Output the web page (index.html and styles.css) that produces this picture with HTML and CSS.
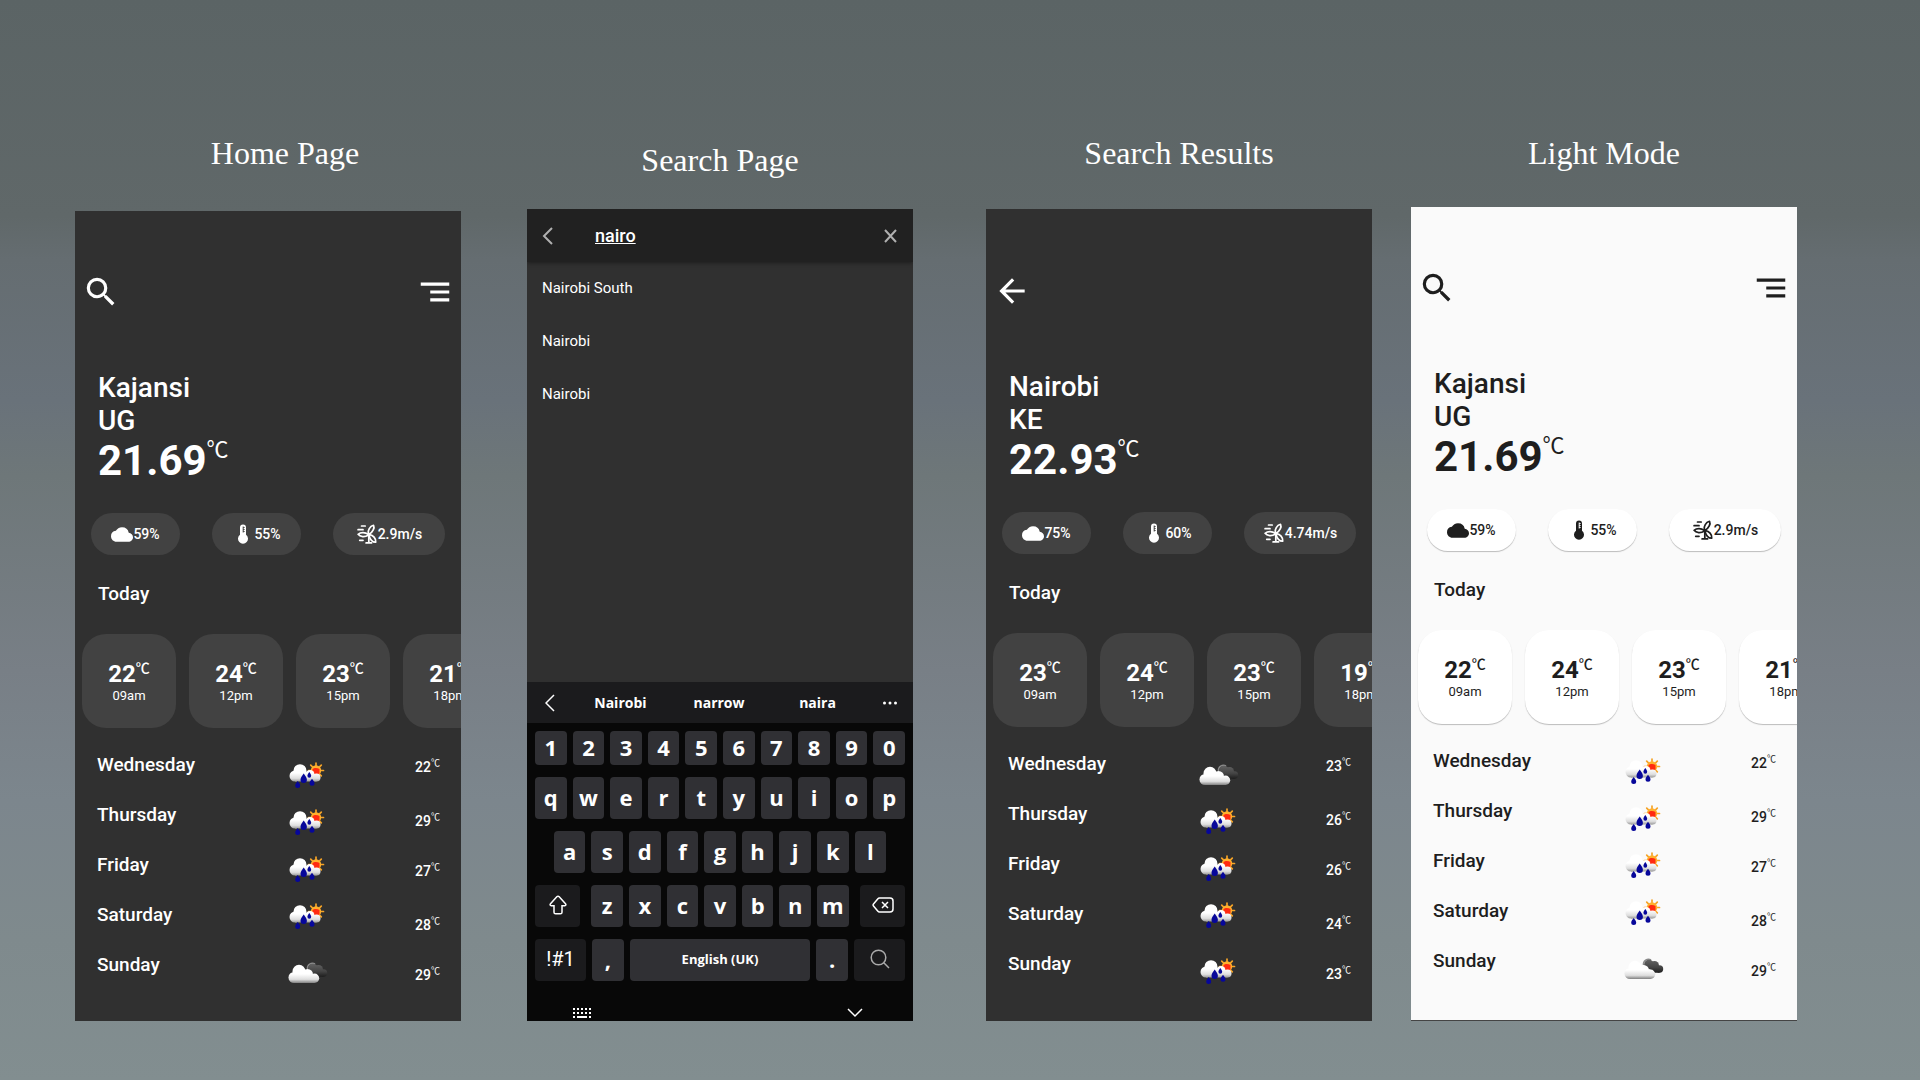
FILE: index.html
```html
<!DOCTYPE html>
<html lang="en">
<head>
    <meta charset="UTF-8">
    <meta name="viewport" content="width=device-width, initial-scale=1.0">
    <title>Weather App</title>

    <link rel="stylesheet" href="styles.css">
</head>
<body>
    <!-- shared icons -->
    <svg class="sprite" width="0" height="0" aria-hidden="true">
        <defs>
            <linearGradient id="cloudFill" gradientUnits="userSpaceOnUse" x1="0" y1="2" x2="0" y2="20">
                <stop offset="0.5" stop-color="#ffffff"/>
                <stop offset="0.8" stop-color="#dedede"/>
                <stop offset="1" stop-color="#909090"/>
            </linearGradient>
            <linearGradient id="cloudyFill" gradientUnits="userSpaceOnUse" x1="0" y1="6" x2="0" y2="24">
                <stop offset="0.5" stop-color="#ffffff"/>
                <stop offset="0.8" stop-color="#dedede"/>
                <stop offset="1" stop-color="#808080"/>
            </linearGradient>
            <linearGradient id="darkFill" gradientUnits="userSpaceOnUse" x1="0" y1="4" x2="0" y2="18">
                <stop offset="0" stop-color="#666666"/>
                <stop offset="0.6" stop-color="#444444"/>
                <stop offset="1" stop-color="#1c1c1c"/>
            </linearGradient>
        </defs>
        <symbol id="search" viewBox="0 0 24 24">
            <path fill="currentColor" d="M15.5 14h-.79l-.28-.27A6.47 6.47 0 0 0 16 9.5 6.5 6.5 0 1 0 9.5 16c1.61 0 3.09-.59 4.23-1.57l.27.28v.79l5 4.99L20.49 19l-4.99-5zm-6 0a4.5 4.5 0 1 1 0-9 4.5 4.5 0 0 1 0 9z"/>
        </symbol>
        <symbol id="menu" viewBox="0 0 24 24">
            <path fill="currentColor" d="M3 6h18v2H3zM9 11h12v2H9zM9 16h12v2H9z"/>
        </symbol>
        <symbol id="back" viewBox="0 0 24 24">
            <path fill="currentColor" d="M20 11H7.83l5.59-5.59L12 4l-8 8 8 8 1.41-1.41L7.83 13H20v-2z"/>
        </symbol>
        <symbol id="cloud" viewBox="0 0 24 16">
            <path fill="currentColor" d="M19.35 6.04A7.49 7.49 0 0 0 12 0C9.11 0 6.6 1.64 5.35 4.04A5.994 5.994 0 0 0 0 10c0 3.31 2.69 6 6 6h13c2.76 0 5-2.24 5-5 0-2.64-2.05-4.78-4.65-4.96z"/>
        </symbol>
        <symbol id="thermo" viewBox="0 0 22 20">
            <path fill="currentColor" d="M8 3.500a3 3 0 0 1 6 0v7.200a5 5 0 1 1-6 0z"/>
            <path class="marks" d="M11.200 2.500v6M11.200 3.500h1.400M11.200 5.500h1.400M11.200 7.500h1.400"/>
        </symbol>
        <symbol id="wind" viewBox="0 0 22 22">
            <g fill="none" stroke="currentColor" stroke-width="1.900" stroke-linecap="round" stroke-linejoin="round">
                <path d="M5 2.200h4M1.200 6.200h5.400M3 18h3.600M10 20.800h6M13 14v6.600"/>
                <path d="M12.400 10.600C11.800 6.800 14 2.600 18.200 1.400 19.600 4.200 17.400 9.200 13.600 11"/>
                <path d="M13.800 11.600C17.600 12.400 21 15.600 20.600 20 17.200 20.200 14.400 16.800 13.200 12.600"/>
                <path d="M12.400 11.400C9 9 4.200 8.800 1.200 11.400 3.400 14.400 8.600 14.600 12.400 12.400"/>
            </g>
            <circle cx="13" cy="11.600" r="1.600" fill="currentColor"/>
        </symbol>
        <symbol id="rain" viewBox="0 0 40 28">
            <g stroke="#f5a327" stroke-width="1.700" stroke-linecap="round">
                <path d="M28 1v15M20.500 8.500h15M22.700 3.200l10.600 10.600M33.300 3.200L22.700 13.800"/>
            </g>
            <circle cx="28" cy="8.500" r="5.200" fill="#ffb02e"/>
            <path fill="#ff2a10" d="M24.500 7c1.500-1.500 5-1.500 7 0v4.500l-3 1.200-4-1.200z"/>
            <g fill="url(#cloudFill)">
                <circle cx="7" cy="14" r="5.500"/>
                <circle cx="12" cy="8.700" r="6.500"/>
                <circle cx="22" cy="12.500" r="4.500"/>
                <circle cx="28.500" cy="15.500" r="4"/>
                <path d="M7 10h15l6.500 5v4.500H7z"/>
            </g>
            <g fill="#07079a">
                <path d="M15.700 11.500c1.700 2.500 3.200 4.300 3.200 6.200a3.200 3.200 0 0 1-6.400 0c0-1.900 1.500-3.700 3.200-6.200z"/>
                <path d="M9.700 19c1.200 1.800 2.500 3 2.500 4.500a2.500 2.500 0 0 1-5 0c0-1.500 1.300-2.700 2.500-4.500z"/>
                <path d="M24 16.800c1.200 1.800 2.500 3 2.500 4.500a2.500 2.500 0 0 1-5 0c0-1.500 1.300-2.700 2.500-4.500z"/>
                <path d="M21.300 10c1 1.500 1.900 2.600 1.900 3.800a1.900 1.900 0 0 1-3.800 0c0-1.200.9-2.300 1.900-3.800z"/>
            </g>
        </symbol>
        <symbol id="cloudy" viewBox="0 0 40 28">
            <path fill="none" stroke="#8a8a8a" stroke-width="1.500" d="M19.500 10a5 5 0 0 1 7.500-5"/>
            <g fill="url(#darkFill)">
                <circle cx="25" cy="9.500" r="4.800"/>
                <circle cx="30.500" cy="10.500" r="4.500"/>
                <circle cx="35.500" cy="14" r="3.700"/>
                <path d="M25 9l10.500 5v3.700H27z"/>
            </g>
            <g fill="url(#cloudyFill)">
                <circle cx="6" cy="18.500" r="5.500"/>
                <circle cx="11" cy="12.300" r="6.500"/>
                <circle cx="19.500" cy="15.500" r="5.500"/>
                <circle cx="26.500" cy="19.300" r="4.700"/>
                <path d="M6 14h14l6.500 5v5H6z"/>
            </g>
        </symbol>
    </svg>

    <main class="gallery">
        <section class="screen screen-home">
            <h2>Home Page</h2>
            <div class="phone">
                <div class="topbar">
                    <button type="button" aria-label="Search"><svg><use href="#search"/></svg></button>
                    <button type="button" aria-label="Menu"><svg><use href="#menu"/></svg></button>
                </div>
                <div class="location">
                    <p>Kajansi</p>
                    <p>UG</p>
                    <div class="temp">21.69<span class="unit">℃</span></div>
                </div>
                <ul class="stats">
                    <li><svg class="cloud"><use href="#cloud"/></svg>59%</li>
                    <li><svg><use href="#thermo"/></svg>55%</li>
                    <li class="wide"><svg><use href="#wind"/></svg>2.9m/s</li>
                </ul>
                <h3>Today</h3>
                <ul class="hours">
                    <li><div class="hour-temp">22<span class="unit">℃</span></div><span>09am</span></li>
                    <li><div class="hour-temp">24<span class="unit">℃</span></div><span>12pm</span></li>
                    <li><div class="hour-temp">23<span class="unit">℃</span></div><span>15pm</span></li>
                    <li><div class="hour-temp">21<span class="unit">℃</span></div><span>18pm</span></li>
                </ul>
                <div class="forecast">
                    <ul class="days">
                        <li>Wednesday</li>
                        <li>Thursday</li>
                        <li>Friday</li>
                        <li>Saturday</li>
                        <li>Sunday</li>
                    </ul>
                    <ul class="icons">
                        <li><svg><use href="#rain"/></svg></li>
                        <li><svg><use href="#rain"/></svg></li>
                        <li><svg><use href="#rain"/></svg></li>
                        <li><svg><use href="#rain"/></svg></li>
                        <li><svg><use href="#cloudy"/></svg></li>
                    </ul>
                    <ul class="temps">
                        <li>22<span class="unit">℃</span></li>
                        <li>29<span class="unit">℃</span></li>
                        <li>27<span class="unit">℃</span></li>
                        <li>28<span class="unit">℃</span></li>
                        <li>29<span class="unit">℃</span></li>
                    </ul>
                </div>
            </div>
        </section>

        <section class="screen screen-search">
            <h2>Search Page</h2>
            <div class="phone">
                <form class="searchbar">
                    <button type="button" aria-label="Back"><svg viewBox="0 0 13 18"><path d="M11 1L3 9l8 8"/></svg></button>
                    <input type="text" aria-label="Search city" value="nairo">
                    <button type="button" aria-label="Clear"><svg viewBox="0 0 13 18"><path d="M1 3l11 12M12 3L1 15"/></svg></button>
                </form>
                <ul class="results">
                    <li><a href="#">Nairobi South</a></li>
                    <li><a href="#">Nairobi</a></li>
                    <li><a href="#">Nairobi</a></li>
                </ul>
                <div class="keyboard">
                    <div class="suggestions">
                        <button type="button" aria-label="Previous"><svg width="10" height="18" viewBox="0 0 10 18"><path d="M9 1L1 9l8 8"/></svg></button>
                        <div class="words">
                            <button type="button">Nairobi</button>
                            <button type="button">narrow</button>
                            <button type="button">naira</button>
                        </div>
                        <button type="button" aria-label="More"><svg width="14" height="4" viewBox="0 0 14 4"><g fill="#fff" stroke="none"><circle cx="1.500" cy="2" r="1.500"/><circle cx="7" cy="2" r="1.500"/><circle cx="12.500" cy="2" r="1.500"/></g></svg></button>
                    </div>
                    <div class="keys">
                        <div class="row numbers">
                            <button type="button">1</button>
                            <button type="button">2</button>
                            <button type="button">3</button>
                            <button type="button">4</button>
                            <button type="button">5</button>
                            <button type="button">6</button>
                            <button type="button">7</button>
                            <button type="button">8</button>
                            <button type="button">9</button>
                            <button type="button">0</button>
                        </div>
                        <div class="row">
                            <button type="button">q</button>
                            <button type="button">w</button>
                            <button type="button">e</button>
                            <button type="button">r</button>
                            <button type="button">t</button>
                            <button type="button">y</button>
                            <button type="button">u</button>
                            <button type="button">i</button>
                            <button type="button">o</button>
                            <button type="button">p</button>
                        </div>
                        <div class="row">
                            <button type="button">a</button>
                            <button type="button">s</button>
                            <button type="button">d</button>
                            <button type="button">f</button>
                            <button type="button">g</button>
                            <button type="button">h</button>
                            <button type="button">j</button>
                            <button type="button">k</button>
                            <button type="button">l</button>
                        </div>
                        <div class="row">
                            <button type="button" class="dark shift" aria-label="Shift"><svg width="18" height="20" viewBox="0 0 18 20"><path d="M9 1.200c.5 0 .8.200 1.200.6l6.300 7c.8.900.4 1.900-.7 1.900H13v6.500c0 1-.6 1.600-1.600 1.600H6.600c-1 0-1.600-.6-1.600-1.600v-6.500H2.200c-1.100 0-1.500-1-.7-1.900l6.300-7c.4-.4.700-.6 1.200-.6z"/></svg></button>
                            <button type="button">z</button>
                            <button type="button">x</button>
                            <button type="button">c</button>
                            <button type="button">v</button>
                            <button type="button">b</button>
                            <button type="button">n</button>
                            <button type="button">m</button>
                            <button type="button" class="dark delete" aria-label="Delete"><svg width="22" height="16" viewBox="0 0 22 16"><path d="M7.500 1H18c1.700 0 3 1.300 3 3v8c0 1.700-1.300 3-3 3H7.500c-.8 0-1.300-.3-1.800-.9L1.500 9c-.6-.7-.6-1.300 0-2l4.200-5.100C6.200 1.300 6.700 1 7.500 1zM10 5l6 6M16 5l-6 6"/></svg></button>
                        </div>
                        <div class="row">
                            <button type="button" class="dark symbols">!#1</button>
                            <button type="button">,</button>
                            <button type="button" class="space">English (UK)</button>
                            <button type="button">.</button>
                            <button type="button" class="dark symbols" aria-label="Search"><svg class="dim" width="20" height="20" viewBox="0 0 20 20"><circle cx="8.500" cy="8.500" r="7.300"/><path d="M13.800 13.800L19 19"/></svg></button>
                        </div>
                    </div>
                    <div class="navbar">
                        <button type="button" aria-label="Change keyboard"><svg width="18" height="10" viewBox="0 0 18 10"><path stroke-width="2" stroke-dasharray="2 2" d="M0 1h18M0 5h18"/><path stroke-width="2" d="M0 9h2M4 9h10M16 9h2"/></svg></button>
                        <button type="button" aria-label="Hide keyboard"><svg width="16" height="10" viewBox="0 0 16 10"><path d="M1 1l7 7 7-7"/></svg></button>
                    </div>
                </div>
            </div>
        </section>

        <section class="screen screen-results">
            <h2>Search Results</h2>
            <div class="phone">
                <div class="topbar">
                    <button type="button" aria-label="Back"><svg><use href="#back"/></svg></button>
                </div>
                <div class="location">
                    <p>Nairobi</p>
                    <p>KE</p>
                    <div class="temp">22.93<span class="unit">℃</span></div>
                </div>
                <ul class="stats">
                    <li><svg class="cloud"><use href="#cloud"/></svg>75%</li>
                    <li><svg><use href="#thermo"/></svg>60%</li>
                    <li class="wide"><svg><use href="#wind"/></svg>4.74m/s</li>
                </ul>
                <h3>Today</h3>
                <ul class="hours">
                    <li><div class="hour-temp">23<span class="unit">℃</span></div><span>09am</span></li>
                    <li><div class="hour-temp">24<span class="unit">℃</span></div><span>12pm</span></li>
                    <li><div class="hour-temp">23<span class="unit">℃</span></div><span>15pm</span></li>
                    <li><div class="hour-temp">19<span class="unit">℃</span></div><span>18pm</span></li>
                </ul>
                <div class="forecast">
                    <ul class="days">
                        <li>Wednesday</li>
                        <li>Thursday</li>
                        <li>Friday</li>
                        <li>Saturday</li>
                        <li>Sunday</li>
                    </ul>
                    <ul class="icons">
                        <li><svg><use href="#cloudy"/></svg></li>
                        <li><svg><use href="#rain"/></svg></li>
                        <li><svg><use href="#rain"/></svg></li>
                        <li><svg><use href="#rain"/></svg></li>
                        <li><svg><use href="#rain"/></svg></li>
                    </ul>
                    <ul class="temps">
                        <li>23<span class="unit">℃</span></li>
                        <li>26<span class="unit">℃</span></li>
                        <li>26<span class="unit">℃</span></li>
                        <li>24<span class="unit">℃</span></li>
                        <li>23<span class="unit">℃</span></li>
                    </ul>
                </div>
            </div>
        </section>

        <section class="screen screen-light">
            <h2>Light Mode</h2>
            <div class="phone light">
                <div class="topbar">
                    <button type="button" aria-label="Search"><svg><use href="#search"/></svg></button>
                    <button type="button" aria-label="Menu"><svg><use href="#menu"/></svg></button>
                </div>
                <div class="location">
                    <p>Kajansi</p>
                    <p>UG</p>
                    <div class="temp">21.69<span class="unit">℃</span></div>
                </div>
                <ul class="stats">
                    <li><svg class="cloud"><use href="#cloud"/></svg>59%</li>
                    <li><svg><use href="#thermo"/></svg>55%</li>
                    <li class="wide"><svg><use href="#wind"/></svg>2.9m/s</li>
                </ul>
                <h3>Today</h3>
                <ul class="hours">
                    <li><div class="hour-temp">22<span class="unit">℃</span></div><span>09am</span></li>
                    <li><div class="hour-temp">24<span class="unit">℃</span></div><span>12pm</span></li>
                    <li><div class="hour-temp">23<span class="unit">℃</span></div><span>15pm</span></li>
                    <li><div class="hour-temp">21<span class="unit">℃</span></div><span>18pm</span></li>
                </ul>
                <div class="forecast">
                    <ul class="days">
                        <li>Wednesday</li>
                        <li>Thursday</li>
                        <li>Friday</li>
                        <li>Saturday</li>
                        <li>Sunday</li>
                    </ul>
                    <ul class="icons">
                        <li><svg><use href="#rain"/></svg></li>
                        <li><svg><use href="#rain"/></svg></li>
                        <li><svg><use href="#rain"/></svg></li>
                        <li><svg><use href="#rain"/></svg></li>
                        <li><svg><use href="#cloudy"/></svg></li>
                    </ul>
                    <ul class="temps">
                        <li>22<span class="unit">℃</span></li>
                        <li>29<span class="unit">℃</span></li>
                        <li>27<span class="unit">℃</span></li>
                        <li>28<span class="unit">℃</span></li>
                        <li>29<span class="unit">℃</span></li>
                    </ul>
                </div>
            </div>
        </section>
    </main>
</body>
</html>
```

FILE: styles.css
```css
* {
    box-sizing: border-box;
}

body {
    margin: 0;
    font-family: Roboto, "Noto Sans CJK SC", sans-serif;
    background: linear-gradient(#5b6465 0%, #606869 20%, #656d71 24%, #69727a 37%, #6e7779 44%, #787f86 62%, #7c868d 74%, #7f8a8d 87%, #828e90 100%);
}

h2, h3, p, ul {
    margin: 0;
    padding: 0;
}

ul {
    list-style: none;
}

button {
    padding: 0;
    border: none;
    background: none;
    color: inherit;
    cursor: pointer;
}

svg {
    display: block;
}

.sprite {
    position: absolute;
}

.gallery {
    display: flex;
    min-height: 100vh;
    padding: 133px 123px 60px 75px;
}

.screen {
    display: flex;
    flex-direction: column;
    flex: 1;
    min-width: 0;
}

.screen h2 {
    font-family: "Liberation Serif", serif;
    font-size: 32px;
    font-weight: normal;
    line-height: 40px;
    text-align: center;
    color: #fff;
}

.screen-home h2 {
    padding-left: 34px;
    margin-bottom: 38px;
}

.screen-search {
    margin-left: 66px;
    padding-top: 7px;
}

.screen-search h2 {
    margin-bottom: 29px;
}

.screen-results {
    margin-left: 73px;
}

.screen-results h2 {
    margin-bottom: 36px;
}

.screen-results .topbar {
    padding-top: 63px;
}

.screen-light {
    margin-left: 39px;
}

.screen-light h2 {
    margin-bottom: 34px;
}

.phone {
    --card: #424242;
    display: flex;
    flex-direction: column;
    flex: 1;
    overflow: hidden;
    background-color: #303030;
    color: #fff;
}

.light {
    --card: #fff;
    background-color: #fafafa;
    color: #1e1e1e;
    border-bottom: 1px solid #444;
}

.topbar {
    display: flex;
    justify-content: space-between;
    padding: 62px 7px 0;
}

.topbar svg {
    width: 38px;
    height: 38px;
}

.location {
    padding: 60px 23px 0;
    font-size: 28px;
    font-weight: 500;
    line-height: 33px;
}

.temp, .hour-temp, .temps li {
    display: flex;
    align-items: flex-start;
}

.temp {
    font-size: 42px;
    font-weight: 700;
    line-height: 48px;
}

.temp .unit {
    font-size: 22px;
    font-weight: 400;
    line-height: 26px;
}

.stats {
    display: flex;
    justify-content: space-between;
    padding: 28px 16px 0;
}

.stats li {
    display: flex;
    align-items: center;
    justify-content: center;
    width: 89px;
    height: 42px;
    border-radius: 21px;
    background-color: var(--card);
    font-size: 14px;
    font-weight: 500;
}

.stats .wide {
    width: 112px;
}

.stats svg {
    width: 22px;
    height: 20px;
}

.stats .cloud {
    height: 15px;
}

.marks {
    fill: none;
    stroke: var(--card);
}

h3 {
    padding: 28px 23px 0;
    font-size: 19px;
    font-weight: 500;
    line-height: 22px;
}

.hours {
    display: flex;
    gap: 13px;
    padding: 29px 0 0 7px;
}

.hours li {
    display: flex;
    flex: 0 0 94px;
    flex-direction: column;
    align-items: center;
    justify-content: center;
    height: 94px;
    padding-top: 2px;
    border-radius: 24px;
    background-color: var(--card);
    font-size: 13px;
    line-height: 16px;
}

.hour-temp {
    font-size: 24px;
    font-weight: 700;
    line-height: 28px;
}

.hour-temp .unit {
    font-size: 14px;
    font-weight: 500;
    line-height: 16px;
}

.light .stats li,
.light .hours li {
    box-shadow: 0 1px 1px rgba(0, 0, 0, 0.25);
}

.forecast {
    display: flex;
    padding: 12px 21px 0 22px;
}

.days {
    flex: 3;
    font-size: 19px;
    font-weight: 500;
    line-height: 50px;
}

.icons {
    flex: 2;
    padding-top: 12px;
}

.icons li {
    display: flex;
    align-items: center;
    height: 47px;
}

.icons li:last-child {
    margin-top: 9px;
}

.icons svg {
    width: 40px;
    height: 28px;
}

.temps {
    padding-top: 19px;
    font-size: 14px;
    font-weight: 500;
    line-height: 16px;
}

.temps li {
    height: 50px;
}

.temps li:nth-child(odd) {
    height: 54px;
}

.temps .unit {
    font-size: 9px;
    font-weight: 400;
    line-height: 8px;
}

/* search page */

.searchbar {
    display: flex;
    align-items: center;
    height: 53px;
    padding: 0 16px 0 14px;
    background-color: #212121;
    box-shadow: 0 1px 4px rgba(0, 0, 0, 0.4);
}

.searchbar svg {
    width: 13px;
    height: 18px;
    fill: none;
    stroke: #b0b0b0;
    stroke-width: 2;
}

.searchbar input {
    flex: 1;
    min-width: 0;
    padding: 0 0 0 41px;
    border: none;
    outline: none;
    background: none;
    font-family: inherit;
    font-size: 18px;
    font-weight: 500;
    text-decoration: underline;
    color: #fff;
}

.results {
    flex: 1;
}

.results a {
    display: block;
    padding-left: 15px;
    font-size: 15px;
    line-height: 53px;
    color: #fff;
    text-decoration: none;
}

.keyboard {
    background-color: #080808;
    font-family: "Open Sans", sans-serif;
}

.keyboard button {
    font-family: inherit;
    font-weight: 700;
}

.keyboard svg {
    margin: auto;
    fill: none;
    stroke: #fff;
    stroke-width: 1.5;
}

.keyboard .dim {
    stroke: #aaa;
}

.suggestions {
    display: flex;
    align-items: center;
    justify-content: space-between;
    height: 41px;
    padding: 0 16px 0 18px;
    background-color: #1b1b1d;
}

.words {
    display: grid;
    flex: 0 0 84%;
    grid-template-columns: repeat(3, 1fr);
}

.words button {
    font-size: 14px;
}

.keys {
    display: flex;
    flex-direction: column;
    gap: 12px;
    padding: 8px 8px 0;
}

.row {
    display: flex;
    justify-content: center;
    gap: 6px;
}

.row button {
    flex: 0 0 calc((100% - 54px) / 10);
    height: 42px;
    padding-bottom: 2px;
    border-radius: 4px;
    background-color: #303034;
    font-size: 22px;
    line-height: 30px;
}

.numbers button {
    height: 34px;
}

.row .dark {
    background-color: #1b1b1d;
}

.row .shift {
    flex-basis: 45px;
    margin-right: auto;
}

.row .delete {
    flex-basis: 45px;
    margin-left: auto;
}

.row .symbols {
    flex-basis: 51px;
    font-family: Roboto, sans-serif;
    font-size: 20px;
    font-weight: 400;
}

.row .space {
    flex: 1;
    font-size: 13px;
}

.navbar {
    display: flex;
    align-items: flex-end;
    justify-content: space-between;
    height: 40px;
    padding: 0 50px 3px 46px;
}
```
